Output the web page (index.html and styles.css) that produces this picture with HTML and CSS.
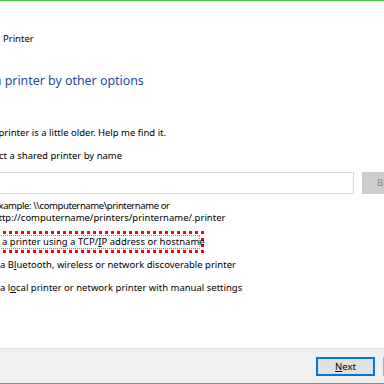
FILE: index.html
```html
<!DOCTYPE html>
<html lang="en">
<head>
    <meta charset="UTF-8">
    <title>Add Printer</title>
    <link rel="stylesheet" href="styles.css">
</head>
<body>
    <div class="window">
        <div class="content">
            <div class="title">Printer</div>
            <h1 class="heading">a printer by other options</h1>

            <div class="options">
                <div class="option first">printer is a little older. Help me find it.</div>
                <div class="option shared">ct a shared printer by name</div>

                <div class="share-row">
                    <div class="path-box"></div>
                    <div class="browse">Browse...</div>
                </div>

                <div class="hint">
                    <div class="tight">xample: \\computername\printername or</div>
                    <div>ttp://computername/printers/printername/.printer</div>
                </div>

                <div class="marked">
                    <div class="focus">a printer using a TCP/<u>I</u>P address or hostname</div>
                </div>
                <div class="option bt">a B<u>l</u>uetooth, wireless or network discoverable printer</div>
                <div class="option">a l<u>o</u>cal printer or network printer with manual settings</div>
            </div>
        </div>

        <div class="footer">
            <div class="btn next"><u>N</u>ext</div>
            <div class="btn">Cancel</div>
        </div>
    </div>
</body>
</html>
```

FILE: styles.css
```css
html, body {
    margin: 0;
    padding: 0;
}

body {
    width: 384px;
    height: 384px;
    overflow: hidden;
    background: #fff;
    font-family: "Noto Sans", "Open Sans", sans-serif;
    font-size: 9.5px;
    color: #000;
}

.window {
    height: 384px;
    box-sizing: border-box;
    border-top: 1px solid #3cc64c;
    border-bottom: 1px solid #3cc64c;
    display: flex;
    flex-direction: column;
}

.content {
    flex: 1;
    overflow: hidden;
}

.title {
    margin: 32px 0 0 3px;
    line-height: 12px;
}

.heading {
    margin: 28px 0 0 -5.5px;
    font-size: 12.4px;
    font-weight: normal;
    line-height: 16px;
    color: #1f4aa3;
    white-space: nowrap;
}

.options {
    margin-top: 38px;
}

.option {
    line-height: 12px;
    white-space: nowrap;
    margin-top: 11px;
}

.option.first {
    margin: 0 0 0 -1.5px;
}

.option.shared {
    margin-left: -1px;
}

.share-row {
    display: flex;
    gap: 8px;
    margin: 10px 0 0 -10px;
}

.path-box {
    flex: none;
    width: 364px;
    height: 22px;
    box-sizing: border-box;
    border: 1px solid #d9d9d9;
}

.browse {
    flex: none;
    width: 75px;
    height: 22px;
    box-sizing: border-box;
    padding-left: 15px;
    background: #cccccc;
    color: #878787;
    line-height: 22px;
}

.hint {
    margin: 6px 0 0 -1.5px;
    line-height: 12px;
    white-space: nowrap;
}

.hint .tight {
    letter-spacing: -0.4px;
}

.marked {
    margin: 7px 0 0 -10px;
    width: 214px;
    height: 22px;
    box-sizing: border-box;
    border: 3px dotted #f00;
    padding: 1px;
}

.focus {
    height: 14px;
    box-sizing: border-box;
    border: 1px dotted #8a8a8a;
    padding-left: 7px;
    line-height: 12px;
    white-space: nowrap;
}

.option.bt {
    margin-top: 6px;
}

.footer {
    flex: none;
    height: 35px;
    box-sizing: border-box;
    background: #f0f0f0;
    border-top: 1px solid #dfdfdf;
    display: flex;
    gap: 8px;
    padding: 8px 0 0 316px;
}

.btn {
    flex: none;
    width: 59px;
    height: 19px;
    box-sizing: border-box;
    background: #e1e1e1;
    border: 1px solid #adadad;
    text-align: center;
    line-height: 17px;
}

.btn.next {
    border: 2px solid #0078d7;
    line-height: 15px;
}
```
